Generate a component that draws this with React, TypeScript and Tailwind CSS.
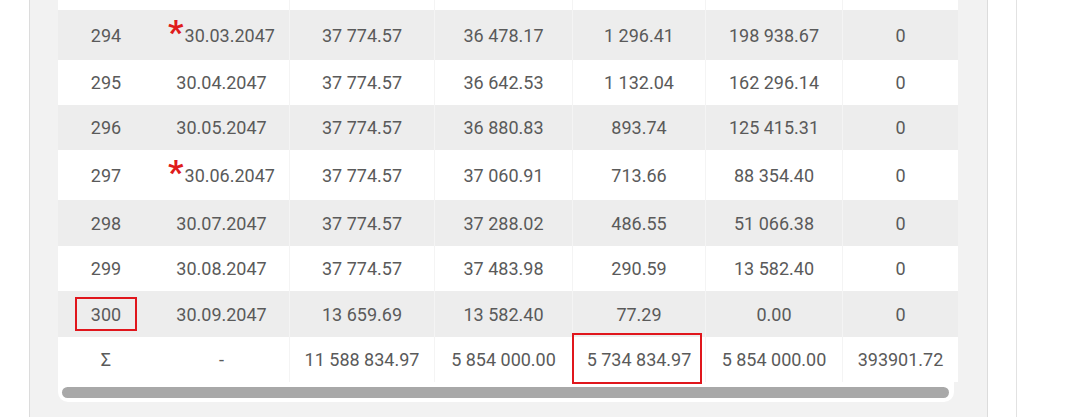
import React from "react";

type Row = {
  n: string;
  date: string;
  star?: boolean;
  cells: string[];
  gray?: boolean;
  h: string;
};

const widths = ["w-[96px]", "w-[136px]", "w-[145px]", "w-[138px]", "w-[133px]", "w-[137px]", "w-[115px]"];

const rows: Row[] = [
  { n: "294", date: "30.03.2047", star: true, cells: ["37 774.57", "36 478.17", "1 296.41", "198 938.67", "0"], gray: true, h: "h-[50px]" },
  { n: "295", date: "30.04.2047", cells: ["37 774.57", "36 642.53", "1 132.04", "162 296.14", "0"], h: "h-[45px]" },
  { n: "296", date: "30.05.2047", cells: ["37 774.57", "36 880.83", "893.74", "125 415.31", "0"], gray: true, h: "h-[45px]" },
  { n: "297", date: "30.06.2047", star: true, cells: ["37 774.57", "37 060.91", "713.66", "88 354.40", "0"], h: "h-[50px]" },
  { n: "298", date: "30.07.2047", cells: ["37 774.57", "37 288.02", "486.55", "51 066.38", "0"], gray: true, h: "h-[46px]" },
  { n: "299", date: "30.08.2047", cells: ["37 774.57", "37 483.98", "290.59", "13 582.40", "0"], h: "h-[45px]" },
  { n: "300", date: "30.09.2047", cells: ["13 659.69", "13 582.40", "77.29", "0.00", "0"], gray: true, h: "h-[46px]" },
];

function Cell({ i, children, last }: { i: number; children?: React.ReactNode; last?: boolean }) {
  return (
    <div
      className={`${widths[i]} relative flex h-full items-center justify-center ${
        i >= 1 && !last ? "border-r border-[#f4f4f4]" : ""
      }`}
    >
      {children}
    </div>
  );
}

function RedBox({ className }: { className: string }) {
  return <div className={`pointer-events-none absolute border-2 border-[#e0161c] ${className}`} />;
}

export default function App() {
  return (
    <div
      className="flex h-[417px] w-[1080px] overflow-hidden bg-white text-[18px] text-[#5a5a5a]"
      style={{ fontFamily: "Roboto, 'Noto Sans', sans-serif" }}
    >
      <div className="w-[29px] shrink-0" />
      <div className="flex w-[959px] shrink-0 flex-col border-x border-[#dcdcdc] bg-[#f2f2f2] pl-[28px]">
        <div className="flex w-[900px] flex-col bg-white">
          {/* tail of the row above */}
          <div className="flex h-[10px] bg-white">
            {widths.map((_, i) => (
              <Cell key={i} i={i} last={i === 6} />
            ))}
          </div>
          {rows.map((r) => (
            <div key={r.n} className={`flex ${r.h} ${r.gray ? "bg-[#ededed]" : "bg-white"}`}>
              <Cell i={0}>
                <span>{r.n}</span>
                {r.n === "300" && <RedBox className="left-[17px] right-[17px] top-[6px] bottom-[6px]" />}
              </Cell>
              <Cell i={1}>
                {r.star && (
                  <span className="relative top-[-3px] mr-[1px] text-[34px] font-bold leading-none text-[#e01b1b]">*</span>
                )}
                <span>{r.date}</span>
              </Cell>
              {r.cells.map((c, k) => (
                <Cell key={k} i={k + 2} last={k === 4}>
                  {c}
                </Cell>
              ))}
            </div>
          ))}
          <div className="flex h-[45px] bg-white">
            <Cell i={0}>Σ</Cell>
            <Cell i={1}>-</Cell>
            <Cell i={2}>11 588 834.97</Cell>
            <Cell i={3}>5 854 000.00</Cell>
            <Cell i={4}>
              5 734 834.97
              <RedBox className="-left-[1px] right-[3px] -top-[4px] -bottom-[2px]" />
            </Cell>
            <Cell i={5}>5 854 000.00</Cell>
            <Cell i={6} last>
              393901.72
            </Cell>
          </div>
        </div>
        <div className="flex h-[20px] w-[896px] items-center rounded-b-[10px] bg-white pl-[4px]">
          <div className="h-[11px] w-[887px] rounded-full bg-[#a8a8a8]" />
        </div>
      </div>
      <div className="w-[28px] shrink-0" />
      <div className="w-px shrink-0 bg-[#e2e2e2]" />
      <div className="flex-1" />
    </div>
  );
}
